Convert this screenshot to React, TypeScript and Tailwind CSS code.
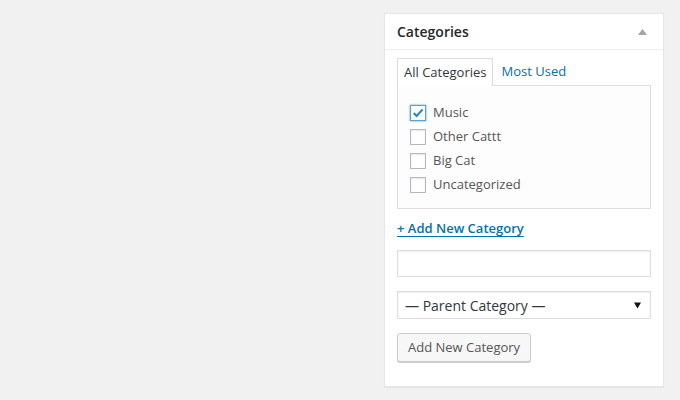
import React from "react";

const cats = [
  { name: "Music", checked: true },
  { name: "Other Cattt", checked: false },
  { name: "Big Cat", checked: false },
  { name: "Uncategorized", checked: false },
];

export default function App() {
  return (
    <div
      className="w-[680px] h-[400px] bg-[#f1f1f1] overflow-hidden text-[13px] text-[#444]"
      style={{ fontFamily: '"Open Sans", "Noto Sans", sans-serif' }}
    >
      <div className="pt-[13px] pl-[384px]">
        <div className="w-[280px] bg-white border border-[#e5e5e5] shadow-[0_1px_1px_rgba(0,0,0,0.04)]">
          <div className="h-[36px] flex items-center justify-between pl-[12px] pr-[16px] border-b border-[#eee]">
            <span className="text-[14px] font-semibold text-[#23282d] leading-none">Categories</span>
            <svg width="9" height="6" viewBox="0 0 9 6" className="mt-[1px]">
              <polygon points="4.5,0 9,6 0,6" fill="#a0a5aa" />
            </svg>
          </div>
          <div className="px-[12px] pt-[8px] pb-[24px]">
            <div className="flex items-end">
              <div className="relative z-10 -mb-px h-[28px] px-[6px] flex items-center bg-white border border-b-0 border-[#ddd] text-[#32373c]">
                All Categories
              </div>
              <div className="h-[27px] px-[8px] flex items-center text-[#0073aa]">Most Used</div>
            </div>
            <div className="border border-[#ddd] bg-[#fdfdfd] pt-[15px] pb-[11px] pl-[12px]">
              {cats.map((c) => (
                <div key={c.name} className="h-[24px] flex items-center">
                  <span
                    className={
                      c.checked
                        ? "w-[16px] h-[16px] flex items-center justify-center bg-white border border-[#5b9dd9] shadow-[0_0_2px_rgba(30,140,190,0.8)]"
                        : "w-[16px] h-[16px] flex items-center justify-center bg-white border border-[#b4b9be] shadow-[inset_0_1px_2px_rgba(0,0,0,0.1)]"
                    }
                  >
                    {c.checked && (
                      <svg width="12" height="11" viewBox="0 0 12 11">
                        <path d="M1 5.8 L2.6 4.3 L4.6 6.4 L9.8 0.8 L11.3 2.3 L4.6 9.4 Z" fill="#1e8cbe" />
                      </svg>
                    )}
                  </span>
                  <span className="ml-[7px] text-[#555]">{c.name}</span>
                </div>
              ))}
            </div>
            <div className="mt-[10px] h-[20px] flex items-center">
              <span className="font-semibold text-[#0073aa] underline underline-offset-[3px]">+ Add New Category</span>
            </div>
            <div className="mt-[11px] h-[27px] bg-white border border-[#ddd] shadow-[inset_0_1px_2px_rgba(0,0,0,0.07)]" />
            <div className="mt-[14px] h-[28px] bg-white border border-[#ddd] shadow-[inset_0_1px_2px_rgba(0,0,0,0.07)] flex items-center justify-between pl-[7px] pr-[9px] text-[#32373c] text-[14px]">
              <span>— Parent Category —</span>
              <svg width="7" height="7" viewBox="0 0 7 7">
                <polygon points="0,0.5 7,0.5 3.5,6.5" fill="#111" />
              </svg>
            </div>
            <div className="mt-[14px] flex">
              <div className="h-[29px] px-[10px] flex items-center bg-[#f7f7f7] border border-[#ccc] rounded-[3px] shadow-[0_1px_0_#ccc] text-[#555]">
                Add New Category
              </div>
            </div>
          </div>
        </div>
      </div>
    </div>
  );
}
